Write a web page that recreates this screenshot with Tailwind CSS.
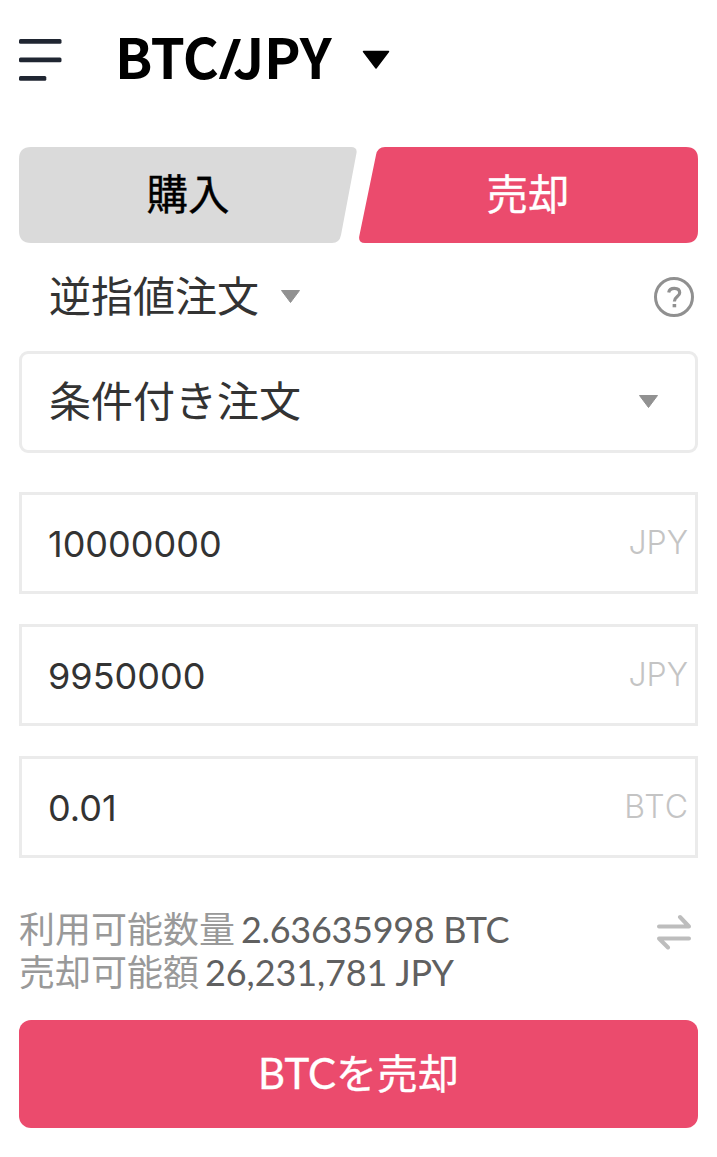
<!DOCTYPE html>
<html lang="ja">
<head>
<meta charset="utf-8">
<title>BTC/JPY</title>
<script src="https://cdn.jsdelivr.net/npm/@tailwindcss/browser@4"></script>
</head>
<body class="bg-white">
<main class="flex h-[1157px] w-[717px] flex-col overflow-hidden bg-white px-[19px] font-['Noto_Sans_CJK_JP',sans-serif] text-[#333]">
  <header class="flex h-[147px] items-start">
    <svg class="mt-[38px] h-[44px] w-[43px] shrink-0" viewBox="0 0 43 44" fill="#202632"><rect y="1" width="42.500" height="4.700" rx="1.500"/><rect y="19.500" width="42.500" height="4.700" rx="1.500"/><rect y="38" width="27.300" height="4.700" rx="1.500"/></svg>
    <h1 class="ml-[53px] mt-[15px] w-[218px] whitespace-nowrap text-[55px] leading-[80px] font-bold tracking-[-0.300px] text-black">BTC<span class="mr-[-8px] font-['Open_Sans',sans-serif]">/</span>JPY</h1>
    <svg class="ml-[29px] mt-[50px] h-[20px] w-[28px]" viewBox="0 0 28 20"><path d="M1.500 1.500H26.500L14 18Z" fill="#000" stroke="#000" stroke-width="1.500" stroke-linejoin="round"/></svg>
  </header>

  <div class="grid h-[96px] shrink-0 grid-cols-[338px_341px]">
    <button class="grid h-[96px] grid-cols-1 text-[41.500px] text-black">
      <svg class="col-start-1 row-start-1 h-[96px] w-[338px]" viewBox="0 0 338 96"><path d="M12 0H332Q338.500 0 337.500 6L322 88Q320.500 96 313 96H12Q0 96 0 84V12Q0 0 12 0Z" fill="#dadada"/></svg>
      <span class="col-start-1 row-start-1 self-center pb-[6px] leading-[60px] [-webkit-text-stroke:0.4px_currentColor]">購入</span>
    </button>
    <button class="grid h-[96px] grid-cols-1 text-[41.500px] text-white">
      <svg class="col-start-1 row-start-1 h-[96px] w-[341px]" viewBox="0 0 341 96"><path d="M28 0H329Q341 0 341 12V84Q341 96 329 96H8Q1 96 2.300 89L19 8Q20.500 0 28 0Z" fill="#eb4b6d"/></svg>
      <span class="col-start-1 row-start-1 self-center pb-[6px] pl-[1px] leading-[60px] [-webkit-text-stroke:0.3px_currentColor]">売却</span>
    </button>
  </div>

  <div class="flex h-[108px] shrink-0 items-center pl-[30px] pr-[3px]">
    <span class="pb-[6px] text-[42px] leading-[60px]">逆指値注文</span>
    <svg class="ml-[21px] mb-[2px] h-[15px] w-[21px]" viewBox="0 0 21 15"><path d="M1.500 1.500H19.500L10.500 13.500Z" fill="#919191" stroke="#919191" stroke-linejoin="round"/></svg>
    <span class="ml-auto flex size-[42px] items-center justify-center">
      <svg class="size-[42px]" viewBox="0 0 42 42" fill="none" stroke="#909090"><circle cx="21" cy="21" r="18.500" stroke-width="3"/><path d="M15.700 16.500C16.200 13.800 18.500 12.400 21.400 12.400C24.700 12.400 26.700 14.100 26.700 16.800C26.700 20.600 21.400 20.700 21.400 25.500" stroke-width="3.200"/><path d="M19.600 28H23.200V31.300H19.600Z" fill="#909090" stroke="none"/></svg>
    </span>
  </div>

  <div class="flex h-[102px] shrink-0 items-center justify-between rounded-[9px] border-[3px] border-[#ebebeb] pl-[27px] pr-[36px]">
    <span class="pb-[7px] text-[42px] leading-[60px]">条件付き注文</span>
    <svg class="mb-[2px] h-[15px] w-[21px]" viewBox="0 0 21 15"><path d="M1.500 1.500H19.500L10.500 13.500Z" fill="#919191" stroke="#919191" stroke-linejoin="round"/></svg>
  </div>

  <div class="mt-[39px] flex shrink-0 flex-col gap-[30px] font-[Inter,sans-serif] text-[36px]">
    <div class="flex h-[102px] items-center justify-between border-[3px] border-[#ebebeb] pl-[26px] pr-[7px]"><span class="pt-[1px]">10000000</span><span class="text-[32px] font-light text-[#c4c4c4]">JPY</span></div>
    <div class="flex h-[102px] items-center justify-between border-[3px] border-[#ebebeb] pl-[26px] pr-[7px]"><span class="pt-[1px]">9950000</span><span class="text-[32px] font-light text-[#c4c4c4]">JPY</span></div>
    <div class="flex h-[102px] items-center justify-between border-[3px] border-[#ebebeb] pl-[26px] pr-[6px]"><span class="pt-[1px]">0.01</span><span class="text-[32px] font-light tracking-[1px] text-[#c4c4c4]">BTC</span></div>
  </div>

  <div class="mt-[48px] flex h-[89px] shrink-0 justify-between pr-[6px] text-[#999]">
    <div class="text-[36px] leading-[43px]">
      <div class="flex whitespace-nowrap"><span>利用可能数量</span><span class="ml-[6px] pt-[2px] -mb-[2px] font-[Lato,sans-serif] tracking-[-0.300px] text-[#606060]">2.63635998 BTC</span></div>
      <div class="flex whitespace-nowrap"><span>売却可能額</span><span class="ml-[6px] pt-[2px] -mb-[2px] font-[Lato,sans-serif] tracking-[-0.100px] text-[#606060]">26,231,781 JPY</span></div>
    </div>
    <svg class="mt-[8px] h-[36px] w-[36px]" viewBox="0 0 36 36" fill="none" stroke="#bdbdbd" stroke-width="4" stroke-linecap="round" stroke-linejoin="round"><path d="M3 12.500H33L24 3M33 24.500H3L12 33.500"/></svg>
  </div>

  <button class="mt-[25px] h-[108px] shrink-0 rounded-[12px] bg-[#eb4b6d] pb-[5px] text-[41px] leading-[60px] text-white [-webkit-text-stroke:0.3px_currentColor]"><span class="font-[Lato,sans-serif] text-[42px]">BTC</span>を売却</button>
</main>
</body>
</html>
